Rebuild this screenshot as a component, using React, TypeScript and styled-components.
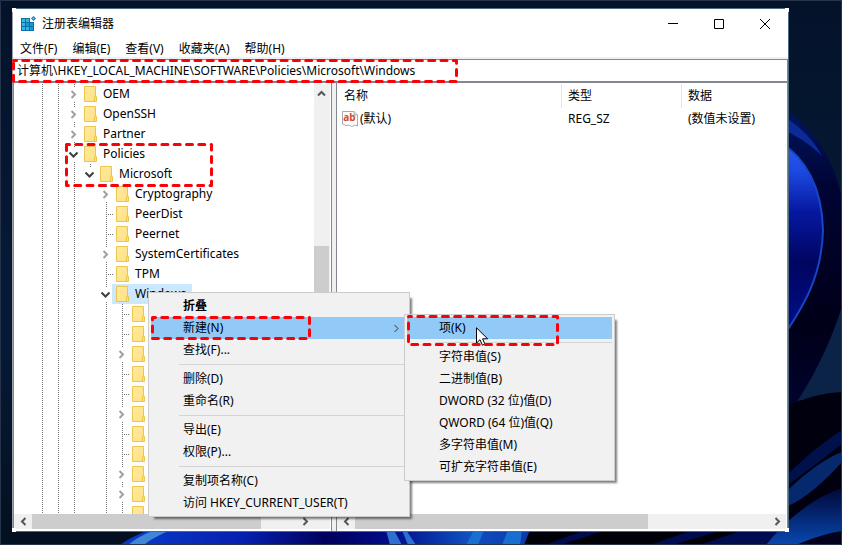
import React from "react";
import styled, { createGlobalStyle, css } from "styled-components";

const GlobalStyle = createGlobalStyle`
  *, *::before, *::after { box-sizing: border-box; }
  body { margin: 0; background: #04142a; }
  body, button, input, table {
    font-family: "Noto Sans", "Noto Sans CJK SC", sans-serif;
    font-size: 12px;
    line-height: 20px;
    color: #000;
  }
`;

const line = "#828790";

/* ---------- desktop and window frame ---------- */

const Desktop = styled.main`
  position: relative;
  display: flex;
  height: 100vh;
  padding: 8px 53px 13px 12px;
  overflow: hidden;
`;

const WallpaperArt = styled.svg`
  position: absolute;
  inset: 0;
  width: 100%;
  height: 100%;
`;

const Window = styled.section`
  position: relative;
  flex: 1;
  min-width: 0;
  display: flex;
  flex-direction: column;
  background: #fff;
  border: 1px solid #4d6b7c;
  border-left-color: #9aa0a6;
`;

const Handle = styled.i<{ $v: "top" | "bottom"; $h: "left" | "right" }>`
  position: absolute;
  width: 4px;
  height: 4px;
  background: #fff;
  ${(p) => p.$v}: -1px;
  ${(p) => p.$h}: -1px;
`;

const TitleBar = styled.header`
  display: flex;
  align-items: center;
  height: 30px;
  padding-left: 8px;
`;

const Title = styled.h1`
  flex: 1;
  margin: 0 0 0 6px;
  font-size: 12px;
  font-weight: 400;
`;

const plainButton = css`
  padding: 0;
  border: 0;
  background: none;
  display: flex;
  align-items: center;
  justify-content: center;
`;

const CaptionButton = styled.button`
  ${plainButton}
  width: 46px;
  height: 30px;

  svg { overflow: visible; }
`;

const MenuBar = styled.nav`
  display: flex;
  align-items: flex-start;
  gap: 1px;
  height: 20px;
  border-bottom: 2px solid #f0f0f0;
`;

const MenuBarItem = styled.button`
  ${plainButton}
  height: 20px;
  padding: 0 7px;
`;

const AddressBar = styled.label`
  position: relative;
  display: flex;
  height: 24px;
  border-top: 1px solid ${line};
  border-bottom: 2px solid ${line};
  border-right: 1px solid ${line};
`;

const AddressInput = styled.input`
  flex: 1;
  min-width: 0;
  padding: 0 4px;
  border: 0;
  outline: 0;
  background: transparent;
`;

const Body = styled.div`
  flex: 1;
  min-height: 0;
  display: flex;
  background: #f0f0f0;
`;

const Pane = styled.section<{ $width?: number }>`
  flex: ${(p) => (p.$width ? `0 0 ${p.$width}px` : "1")};
  min-width: 0;
  display: flex;
  flex-direction: column;
  padding: 1px 1px 2px 0;
  background: #fff;
  border: solid ${line};
  border-width: 0 1px;
`;

const Splitter = styled.div`
  width: 4px;
`;

const PaneContent = styled.div`
  flex: 1;
  min-height: 0;
  display: flex;
`;

/* ---------- scroll bars ---------- */

const ScrollButton = styled.button<{ $vertical?: boolean }>`
  ${plainButton}
  flex: none;
  width: ${(p) => (p.$vertical ? "15px" : "18px")};
  height: ${(p) => (p.$vertical ? "18px" : "15px")};
`;

const ScrollColumn = styled.div`
  display: flex;
  flex-direction: column;
  width: 16px;
  padding-right: 1px;
  background: #f0f0f0;
`;

const ScrollRow = styled.div<{ $corner?: boolean }>`
  display: flex;
  height: 15px;
  padding-right: ${(p) => (p.$corner ? "16px" : "0")};
  background: #f0f0f0;
`;

const Track = styled.div<{ $rows?: string; $columns?: string }>`
  flex: 1;
  display: grid;
  grid-template-rows: ${(p) => p.$rows ?? "1fr"};
  grid-template-columns: ${(p) => p.$columns ?? "1fr"};
`;

const Thumb = styled.div<{ $row?: number; $column?: number }>`
  grid-row: ${(p) => p.$row ?? 1};
  grid-column: ${(p) => p.$column ?? 1};
  background: #cdcdcd;
`;

/* ---------- key tree ---------- */

const Tree = styled.ul`
  flex: 1;
  min-width: 0;
  margin: 0;
  padding: 0 0 0 20px;
  overflow: hidden;
  list-style: none;
`;

const TreeRow = styled.li`
  display: flex;
  height: 20px;
`;

const dotsDown = "repeating-linear-gradient(#777 0 1px, transparent 1px 2px)";
const dotsAcross = "repeating-linear-gradient(90deg, #777 0 1px, transparent 1px 2px)";

type Cell = "line" | "none" | "tick" | "closed" | "open" | "openLast";

const cellBackground: Record<Cell, string> = {
  line: `${dotsDown} 8px 0 / 1px 100% no-repeat`,
  none: "none",
  tick: `${dotsDown} 8px 0 / 1px 100% no-repeat, ${dotsAcross} 8px 10px / 7px 1px no-repeat`,
  closed: `${dotsDown} 8px 0 / 1px 4px no-repeat, ${dotsDown} 8px 18px / 1px 2px no-repeat`,
  open: `${dotsDown} 8px 0 / 1px 4px no-repeat, ${dotsDown} 8px 18px / 1px 2px no-repeat`,
  openLast: `${dotsDown} 8px 0 / 1px 4px no-repeat`,
};

const GuideCell = styled.span<{ $cell: Cell }>`
  flex: none;
  display: flex;
  align-items: center;
  justify-content: center;
  width: 16px;
  padding-right: 1px;
  background: ${(p) => cellBackground[p.$cell]};
`;

const KeyLabel = styled.span<{ $selected?: boolean }>`
  display: flex;
  align-items: center;
  gap: 6px;
  margin-left: -2px;
  padding: 0 6px 0 4px;
  background: ${(p) => (p.$selected ? "#cce8ff" : "none")};
`;

/* ---------- value list ---------- */

const ValueTable = styled.table`
  width: 100%;
  align-self: flex-start;
  table-layout: fixed;
  border-collapse: separate;
  border-spacing: 0;
  text-align: left;
`;

const HeadCell = styled.th<{ $width?: number; $first?: boolean }>`
  width: ${(p) => (p.$width ? `${p.$width}px` : "auto")};
  height: 24px;
  padding: 0 0 0 ${(p) => (p.$first ? 7 : 6)}px;
  font-weight: 400;
  border-right: ${(p) => (p.$width ? "1px solid #e5e5e5" : "0")};
`;

const DataCell = styled.td`
  height: 21px;
  padding: 0 0 0 6px;
`;

const ValueName = styled.span`
  display: flex;
  align-items: center;
  gap: 2px;
  margin-left: -1px;
`;

/* ---------- context menus ---------- */

const Popup = styled.div<{ $left: number; $top: number; $width: number }>`
  position: absolute;
  left: ${(p) => p.$left}px;
  top: ${(p) => p.$top}px;
  width: ${(p) => p.$width}px;
  padding: 2px;
  background: #f1f1f1;
  border: 1px solid #ccc;
  box-shadow: 4px 4px 2px -2px rgba(0, 0, 0, 0.5);
`;

const PopupItem = styled.button<{ $active?: boolean; $bold?: boolean }>`
  ${plainButton}
  justify-content: space-between;
  width: 100%;
  height: 22px;
  padding: 0 6px 0 32px;
  font-weight: ${(p) => (p.$bold ? 700 : 400)};
  background: ${(p) => (p.$active ? "#91c9f7" : "none")};
`;

const PopupRule = styled.hr`
  height: 1px;
  margin: 3px 0 3px 28px;
  border: 0;
  background: #d4d4d4;
`;

const PointerArt = styled.svg`
  position: absolute;
  left: 71px;
  top: 12px;
`;

/* ---------- red dashed markers ---------- */

const MarkerArt = styled.svg<{ $left: number; $top: number }>`
  position: absolute;
  left: ${(p) => p.$left}px;
  top: ${(p) => p.$top}px;
  pointer-events: none;
`;

function Marker({ left, top, width, height }: { left: number; top: number; width: number; height: number }) {
  return (
    <MarkerArt $left={left} $top={top} width={width} height={height} aria-hidden>
      <rect x="1.5" y="1.5" width={width - 3} height={height - 3} fill="none" stroke="#fb0007"
        strokeWidth="3" strokeDasharray="6 6.3" strokeDashoffset="3" strokeLinecap="round" strokeLinejoin="round" />
    </MarkerArt>
  );
}

/* ---------- drawings ---------- */

const angles = {
  right: "M2.5 1 L6 4.5 L2.5 8",
  left: "M6.5 1 L3 4.5 L6.5 8",
  up: "M1 6.5 L4.5 3 L8 6.5",
  down: "M0.5 2.5 L4.5 6.5 L8.5 2.5",
};

function Angle({ to, color = "#555", weight = 2 }: { to: keyof typeof angles; color?: string; weight?: number }) {
  return (
    <svg width="9" height="9" viewBox="0 0 9 9" aria-hidden>
      <path d={angles[to]} fill="none" stroke={color} strokeWidth={weight} />
    </svg>
  );
}

function Folder() {
  return (
    <svg width="13" height="16" viewBox="0 0 13 16" aria-hidden>
      <defs>
        <linearGradient id="folderFill" x1="0" y1="0" x2="1" y2="1">
          <stop offset="0" stopColor="#ffeba6" />
          <stop offset="1" stopColor="#fddf7c" />
        </linearGradient>
      </defs>
      <path d="M0.5 0.5H11.5V10.5H12.5V15.5H0.5Z" fill="url(#folderFill)" stroke="#ecc64c" />
      <path d="M10.5 15V10.5H12" fill="none" stroke="#ecc64c" />
    </svg>
  );
}

function RegistryIcon() {
  return (
    <svg width="15" height="16" viewBox="0 0 15 16" aria-hidden>
      <path d="M0 2H9V6H13V15H0Z" fill="#0b6fa5" />
      <g fill="#37b5ea">
        <path d="M1 3h3v3H1zM5 3h3v3H5zM1 7h3v3H1zM1 11h3v3H1zM5 11h3v3H5z" />
      </g>
      <g fill="#149bd7">
        <path d="M5 7h3v3H5zM9 7h3v3H9zM9 11h3v3H9z" />
      </g>
      <path d="M12.5 0L15 2.5L12.5 5L10 2.5Z" fill="#0b77ad" />
      <path d="M12.5 1.3L13.7 2.5L12.5 3.7L11.3 2.5Z" fill="#62cdf5" />
    </svg>
  );
}

function StringValueIcon() {
  return (
    <svg width="16" height="16" viewBox="0 0 16 16" aria-hidden>
      <path d="M0.5 0.5H12L15.5 4V15L13 14L10 15.5L7 14L4 14.5L0.5 13Z" fill="#fff" stroke="#a9a9a9" />
      <path d="M12 0.5V4H15.5" fill="#e4e4e4" stroke="#a9a9a9" />
      <text x="7.5" y="10" textAnchor="middle" fontFamily="Noto Sans, sans-serif" fontSize="10" fontWeight="700" fill="#d9482b">ab</text>
    </svg>
  );
}

function Wallpaper() {
  return (
    <WallpaperArt viewBox="0 0 842 545" preserveAspectRatio="none" aria-hidden>
      <defs>
        <linearGradient id="sky" x1="0" y1="0" x2="0" y2="1">
          <stop offset="0" stopColor="#04132a" />
          <stop offset="0.6" stopColor="#061a38" />
          <stop offset="1" stopColor="#03101f" />
        </linearGradient>
        <linearGradient id="petal" x1="0" y1="0" x2="0" y2="1">
          <stop offset="0" stopColor="#2a5cf2" />
          <stop offset="0.15" stopColor="#1c48e0" />
          <stop offset="0.35" stopColor="#0618a0" />
          <stop offset="0.6" stopColor="#000560" />
          <stop offset="1" stopColor="#001090" />
        </linearGradient>
        <linearGradient id="outer" x1="0" y1="0" x2="0" y2="1">
          <stop offset="0" stopColor="#001560" />
          <stop offset="0.25" stopColor="#000434" />
          <stop offset="0.7" stopColor="#000018" />
          <stop offset="1" stopColor="#000430" />
        </linearGradient>
        <linearGradient id="floor" x1="0" y1="0" x2="1" y2="0">
          <stop offset="0" stopColor="#0a3cc8" />
          <stop offset="0.3" stopColor="#0620b0" />
          <stop offset="0.5" stopColor="#00005c" />
          <stop offset="0.66" stopColor="#000c88" />
          <stop offset="0.85" stopColor="#1050c0" />
          <stop offset="1" stopColor="#0c38a8" />
        </linearGradient>
        <linearGradient id="corner" x1="0" y1="0" x2="0" y2="1">
          <stop offset="0" stopColor="#010736" />
          <stop offset="1" stopColor="#0848b0" />
        </linearGradient>
      </defs>
      <rect width="842" height="545" fill="url(#sky)" />
      <path d="M796 300H842V400H788Z" fill="#0c2348" />
      <path d="M788 112C816 130 836 165 842 200V306C832 340 812 380 796 403L788 414Z" fill="url(#outer)" />
      <path d="M788 119C802 129 814 140 822 156C812 146 800 138 788 132Z" fill="#0b2a96" />
      <path d="M780 142C806 158 822 188 823 230C822 275 805 305 780 341Z" fill="url(#petal)" stroke="#1646c4" strokeWidth="2" />
      <path d="M788 406C806 397 824 393 842 392V545H788Z" fill="#00000f" />
      <path d="M788 474C806 456 824 442 842 430V444C824 458 806 472 788 485Z" fill="#00104a" />
      <path d="M788 490C806 472 826 458 842 452V462C824 482 806 498 788 506Z" fill="#06286c" />
      <path d="M522 530H790V545H522Z" fill="#000008" />
      <path d="M545 545L580 532H600L560 545ZM650 545L690 531H720L672 545ZM700 545L740 531H790L770 545Z" fill="#000c50" />
      <path d="M766 545C780 528 806 500 842 488V545Z" fill="url(#corner)" />
      <path d="M796 545C812 538 828 533 842 531V545Z" fill="#02021c" />
      <path d="M120 545C130 538 138 534 150 530H530L524 545Z" fill="url(#floor)" />
      <path d="M128 545C136 538 148 532 156 530H172C160 534 150 540 144 545Z" fill="#3f86d6" />
      <path d="M386 530H394L402 545H390ZM402 530H406L416 545H408Z" fill="#2f6fd0" />
      <path d="M474 530H484L478 545H466ZM508 530H522L520 545H502Z" fill="#1a6ed0" />
      <path d="M0.5 0.5H841.5V544.5H0.5Z" fill="none" stroke="#26344a" />
    </WallpaperArt>
  );
}

/* ---------- data ---------- */

const base: Cell[] = ["line", "line"];
const under: Cell[] = ["line", "line", "line", "none"];
const deep: Cell[] = [...under, "line"];

const keys: { name?: string; cells: Cell[]; selected?: boolean }[] = [
  { name: "OEM", cells: [...base, "closed"] },
  { name: "OpenSSH", cells: [...base, "closed"] },
  { name: "Partner", cells: [...base, "closed"] },
  { name: "Policies", cells: [...base, "open"] },
  { name: "Microsoft", cells: [...base, "line", "openLast"] },
  { name: "Cryptography", cells: [...under, "closed"] },
  { name: "PeerDist", cells: [...under, "tick"] },
  { name: "Peernet", cells: [...under, "tick"] },
  { name: "SystemCertificates", cells: [...under, "closed"] },
  { name: "TPM", cells: [...under, "tick"] },
  { name: "Windows", cells: [...under, "open"], selected: true },
  ...(["tick", "tick", "closed", "tick", "tick", "closed", "tick", "tick", "closed", "closed", "tick"] as Cell[]).map(
    (cell) => ({ cells: [...deep, cell] })
  ),
];

const menus = ["文件(F)", "编辑(E)", "查看(V)", "收藏夹(A)", "帮助(H)"];

function KeyRow({ name, cells, selected }: (typeof keys)[number]) {
  return (
    <TreeRow role="treeitem" aria-selected={!!selected}>
      {cells.map((cell, i) => (
        <GuideCell key={i} $cell={cell}>
          {cell === "closed" && <Angle to="right" color="#a0a0a0" />}
          {(cell === "open" || cell === "openLast") && <Angle to="down" color="#404040" />}
        </GuideCell>
      ))}
      <KeyLabel $selected={selected}>
        <Folder />
        {name}
      </KeyLabel>
    </TreeRow>
  );
}

export default function App() {
  return (
    <>
      <GlobalStyle />
      <Desktop>
        <Wallpaper />
        <Window>
          <TitleBar>
            <RegistryIcon />
            <Title>注册表编辑器</Title>
            <CaptionButton aria-label="最小化">
              <svg width="10" height="10" viewBox="0 0 10 10"><path d="M0 4.5H10" stroke="#000" /></svg>
            </CaptionButton>
            <CaptionButton aria-label="最大化">
              <svg width="10" height="10" viewBox="0 0 10 10"><path d="M0.5 0.5H9.5V9.5H0.5Z" fill="none" stroke="#000" /></svg>
            </CaptionButton>
            <CaptionButton aria-label="关闭">
              <svg width="10" height="10" viewBox="0 0 10 10"><path d="M0 0L10 10M10 0L0 10" stroke="#000" /></svg>
            </CaptionButton>
          </TitleBar>
          <MenuBar>
            {menus.map((m) => <MenuBarItem key={m}>{m}</MenuBarItem>)}
          </MenuBar>
          <AddressBar>
            <AddressInput aria-label="地址" defaultValue={"计算机\\HKEY_LOCAL_MACHINE\\SOFTWARE\\Policies\\Microsoft\\Windows"} />
            <Marker left={-1} top={-1} width={446} height={24} />
          </AddressBar>
          <Body>
            <Pane $width={319}>
              <PaneContent>
                <Tree role="tree">
                  {keys.map((k, i) => <KeyRow key={i} {...k} />)}
                </Tree>
                <ScrollColumn>
                  <ScrollButton $vertical aria-label="向上滚动"><Angle to="up" /></ScrollButton>
                  <Track $rows="144fr 80fr 170fr"><Thumb $row={2} /></Track>
                  <ScrollButton $vertical aria-label="向下滚动"><Angle to="down" /></ScrollButton>
                </ScrollColumn>
              </PaneContent>
              <ScrollRow $corner>
                <ScrollButton aria-label="向左滚动"><Angle to="left" /></ScrollButton>
                <Track $columns="229fr 35fr"><Thumb /></Track>
                <ScrollButton aria-label="向右滚动"><Angle to="right" /></ScrollButton>
              </ScrollRow>
            </Pane>
            <Splitter />
            <Pane>
              <PaneContent>
                <ValueTable>
                  <thead>
                    <tr>
                      <HeadCell $width={225} $first>名称</HeadCell>
                      <HeadCell $width={120}>类型</HeadCell>
                      <HeadCell>数据</HeadCell>
                    </tr>
                  </thead>
                  <tbody>
                    <tr>
                      <DataCell><ValueName><StringValueIcon />(默认)</ValueName></DataCell>
                      <DataCell>REG_SZ</DataCell>
                      <DataCell>(数值未设置)</DataCell>
                    </tr>
                  </tbody>
                </ValueTable>
              </PaneContent>
              <ScrollRow>
                <ScrollButton aria-label="向左滚动"><Angle to="left" /></ScrollButton>
                <Track $columns="293fr 120fr"><Thumb /></Track>
                <ScrollButton aria-label="向右滚动"><Angle to="right" /></ScrollButton>
              </ScrollRow>
            </Pane>
          </Body>

          <Marker left={52} top={134} width={148} height={44} />

          <Popup $left={135} $top={283} $width={262}>
            <PopupItem $bold>折叠</PopupItem>
            <PopupItem $active>新建(N)<Angle to="right" color="#333" weight={1} /></PopupItem>
            <PopupItem>查找(F)...</PopupItem>
            <PopupRule />
            <PopupItem>删除(D)</PopupItem>
            <PopupItem>重命名(R)</PopupItem>
            <PopupRule />
            <PopupItem>导出(E)</PopupItem>
            <PopupItem>权限(P)...</PopupItem>
            <PopupRule />
            <PopupItem>复制项名称(C)</PopupItem>
            <PopupItem>访问 HKEY_CURRENT_USER(T)</PopupItem>
            <Marker left={2} top={23} width={160} height={24} />
          </Popup>

          <Popup $left={391} $top={305} $width={211}>
            <PopupItem $active>项(K)</PopupItem>
            <PopupRule />
            <PopupItem>字符串值(S)</PopupItem>
            <PopupItem>二进制值(B)</PopupItem>
            <PopupItem>DWORD (32 位)值(D)</PopupItem>
            <PopupItem>QWORD (64 位)值(Q)</PopupItem>
            <PopupItem>多字符串值(M)</PopupItem>
            <PopupItem>可扩充字符串值(E)</PopupItem>
            <PointerArt width="13" height="19" viewBox="0 0 13 19" aria-hidden>
              <path d="M0.5 0.8V16L4 12.7L6.4 18.2L8.9 17.1L6.6 11.8H11.6Z" fill="#fff" stroke="#000" />
            </PointerArt>
            <Marker left={2} top={0} width={152} height={31} />
          </Popup>

          <Handle $v="top" $h="left" />
          <Handle $v="top" $h="right" />
          <Handle $v="bottom" $h="left" />
          <Handle $v="bottom" $h="right" />
        </Window>
      </Desktop>
    </>
  );
}
